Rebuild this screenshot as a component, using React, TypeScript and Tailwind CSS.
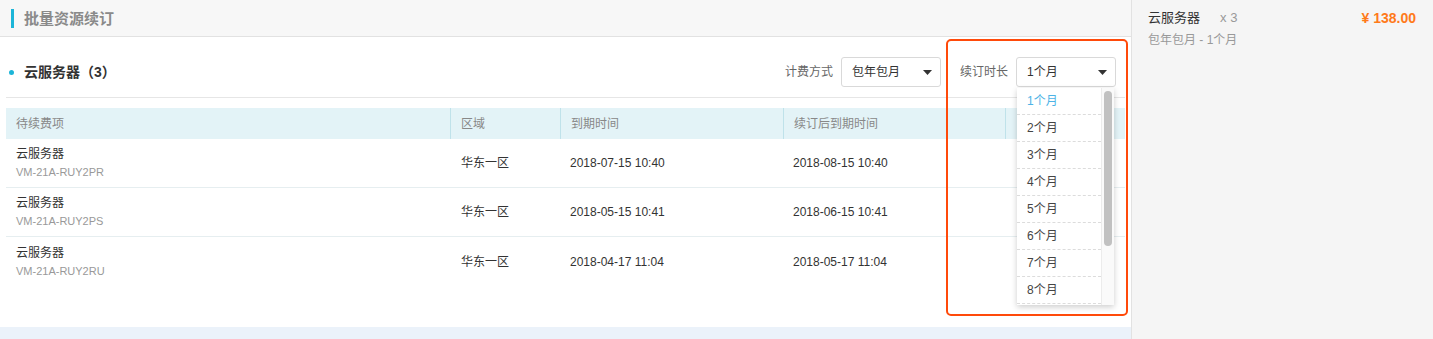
import React from "react";

const font = { fontFamily: '"Liberation Sans", "Noto Sans CJK SC", sans-serif' };

const rows = [
  { id: "VM-21A-RUY2PR", due: "2018-07-15 10:40", after: "2018-08-15 10:40" },
  { id: "VM-21A-RUY2PS", due: "2018-05-15 10:41", after: "2018-06-15 10:41" },
  { id: "VM-21A-RUY2RU", due: "2018-04-17 11:04", after: "2018-05-17 11:04" },
];

const months = ["1个月", "2个月", "3个月", "4个月", "5个月", "6个月", "7个月", "8个月"];

function Caret() {
  return (
    <svg width="9" height="5" viewBox="0 0 9 5" className="shrink-0">
      <path d="M0 0 L9 0 L4.5 5 Z" fill="#333" />
    </svg>
  );
}

export default function App() {
  return (
    <div className="flex w-[1433px] h-[339px] overflow-hidden bg-white" style={font}>
      <div className="w-[1131px] flex flex-col shrink-0">
        <div className="h-[37px] bg-[#f7f7f7] border-b border-[#e2e2e2] flex items-center pl-[11px] shrink-0">
          <div className="w-[3px] h-[19px] bg-[#1cb5d8]" />
          <div className="ml-[10px] text-[15px] font-bold text-[#8a8a8a] leading-none">批量资源续订</div>
        </div>
        <div className="relative flex-1 bg-white">
          <div className="mx-[6px] pt-[20px] pb-[10px] border-b border-[#e6e6e6] flex items-center h-[61px]">
            <div className="flex items-center h-[30px] flex-1">
              <div className="w-[5px] h-[5px] rounded-full bg-[#1cb5d8] ml-[3px]" />
              <div className="ml-[10px] text-[14px] font-bold text-[#333]">云服务器（3）</div>
            </div>
            <div className="flex items-center h-[30px]">
              <span className="text-[12px] text-[#666]">计费方式</span>
              <div className="ml-[8px] w-[100px] h-[30px] border border-[#d9d9d9] rounded-[3px] flex items-center justify-between pl-[10px] pr-[8px] text-[12px] text-[#333]">
                <span>包年包月</span>
                <Caret />
              </div>
              <span className="ml-[19px] text-[12px] text-[#666]">续订时长</span>
              <div className="ml-[8px] mr-[9px] w-[100px] h-[30px] border border-[#d9d9d9] rounded-[3px] flex items-center justify-between pl-[10px] pr-[8px] text-[12px] text-[#333]">
                <span>1个月</span>
                <Caret />
              </div>
            </div>
          </div>
          <div className="mx-[6px] mt-[10px]">
            <div className="flex h-[31px] bg-[#e3f3f7] text-[12px] text-[#888] items-center">
              <div className="w-[444px] pl-[10px] h-full flex items-center">待续费项</div>
              <div className="w-[110px] pl-[10px] h-full flex items-center border-l border-[#bfe2ea]">区域</div>
              <div className="w-[223px] pl-[10px] h-full flex items-center border-l border-[#bfe2ea]">到期时间</div>
              <div className="w-[222px] pl-[10px] h-full flex items-center border-l border-[#bfe2ea]">续订后到期时间</div>
              <div className="flex-1 h-full border-l border-[#bfe2ea]" />
            </div>
            {rows.map((r, i) => (
              <div key={r.id} className={`flex h-[49px] items-center text-[12px] ${i < 2 ? "border-b border-[#e6eef0]" : ""}`}>
                <div className="w-[444px] pl-[10px] flex flex-col">
                  <span className="text-[#333] leading-[16px]">云服务器</span>
                  <span className="text-[#999] text-[11px] leading-[16px] mt-[2px]">{r.id}</span>
                </div>
                <div className="w-[110px] pl-[11px] text-[#333]">华东一区</div>
                <div className="w-[223px] pl-[10px] text-[#333]">{r.due}</div>
                <div className="w-[222px] pl-[10px] text-[#333]">{r.after}</div>
                <div className="flex-1" />
              </div>
            ))}
          </div>

          <div className="absolute left-[946px] top-[2px] w-[182px] h-[277px] border-2 border-[#ff4a0a] rounded-[5px] pointer-events-none" />

          <div className="absolute left-[1017px] top-[51px] w-[97px] h-[217px] bg-white shadow-[0_2px_6px_rgba(0,0,0,0.2)] flex overflow-hidden">
            <div className="flex-1 flex flex-col">
              {months.map((m, i) => (
                <div
                  key={m}
                  className={`h-[27px] shrink-0 flex items-center pl-[10px] text-[12px] border-b border-dashed border-[#dcdcdc] ${i === 0 ? "text-[#4db3e6]" : "text-[#444]"}`}
                >
                  {m}
                </div>
              ))}
            </div>
            <div className="w-[13px] bg-[#fafafa] border-l border-[#ececec] pt-[3px] flex justify-center">
              <div className="w-[8px] h-[155px] rounded-[4px] bg-[#c1c1c1]" />
            </div>
          </div>
        </div>
        <div className="h-[12px] bg-[#ebf2fa] shrink-0" />
      </div>
      <div className="flex-1 bg-[#f5f5f5] border-l border-[#e2e2e2] pl-[16px] pr-[17px] pt-[9px]">
        <div className="flex items-center justify-between h-[18px]">
          <div className="flex items-center">
            <span className="text-[13px] text-[#333]">云服务器</span>
            <span className="ml-[20px] text-[13px] text-[#999]">x 3</span>
          </div>
          <span className="text-[14px] font-bold text-[#ff7a1a]">¥ 138.00</span>
        </div>
        <div className="mt-[4px] text-[12px] text-[#999]">包年包月 - 1个月</div>
      </div>
    </div>
  );
}
